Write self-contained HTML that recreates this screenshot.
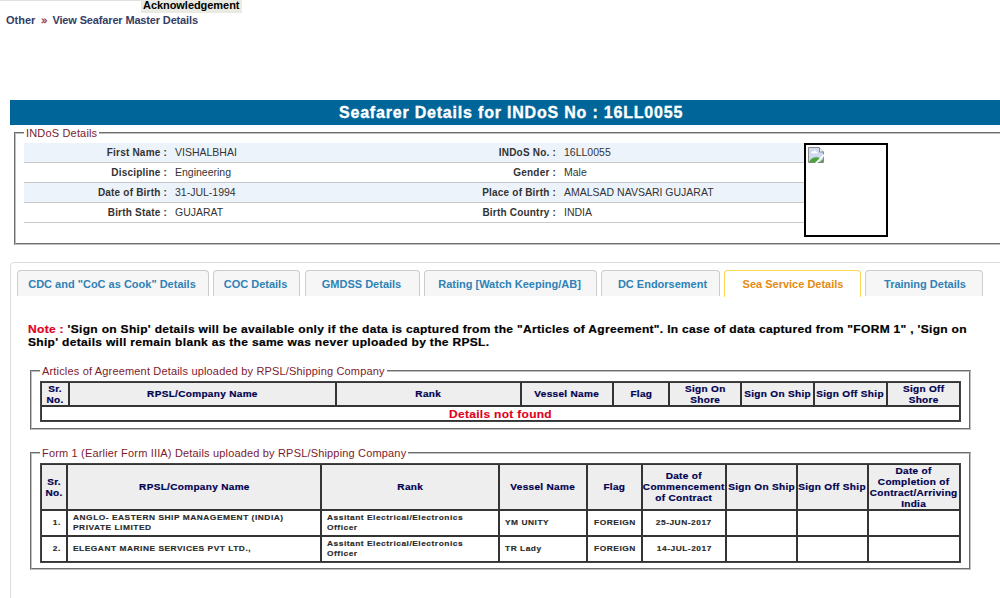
<!DOCTYPE html>
<html><head><meta charset="utf-8">
<style>
*{box-sizing:border-box}
html,body{margin:0;padding:0;background:#fff;width:1000px;height:598px;overflow:hidden;position:relative;font-family:"Liberation Sans",sans-serif}
.abs{position:absolute}
.topline{left:0;top:0;width:141px;height:1px;background:#e2e2dc}
.ack{left:141px;top:0;width:101px;height:13px;background:#eaeae3;font-weight:bold;font-size:11px;color:#000;line-height:11px;padding-left:2px;letter-spacing:-.05px;white-space:nowrap}
.crumb{left:6px;top:14px;font-size:11px;font-weight:bold;color:#353d63;white-space:nowrap;line-height:13px}
.crumb .sep{color:#8e2a3c;margin:0 5px 0 6px;font-weight:normal;-webkit-text-stroke:.3px #8e2a3c}
.crumb .v{letter-spacing:-.15px}
.bar{left:10px;top:100px;width:1010px;height:25px;background:#006699}
.bar .t{position:absolute;left:329px;top:0;line-height:25px;color:#fff;font-weight:bold;font-size:16px;letter-spacing:.8px;white-space:nowrap;-webkit-text-stroke:.35px #fff}
.fs{position:absolute;border:2px groove #c0c0c0}
.lg{position:absolute;background:#fff;color:#7d1a2c;font-size:11px;line-height:13px;padding:0 2px;white-space:nowrap;letter-spacing:.17px}
.row{position:absolute;left:24px;width:780px;height:20px;border-bottom:1px solid #c8c8c8}
.row.alt{background:#edf3fb}
.lbl{position:absolute;font-weight:bold;font-size:10px;letter-spacing:.2px;color:#333;text-align:right;white-space:nowrap;line-height:20px;top:0px}
.val{position:absolute;font-size:10.5px;color:#333;white-space:nowrap;line-height:20px;top:-1px}
.imgbox{left:804px;top:143px;width:84px;height:94px;border:2px solid #000}
.tabs{left:10px;top:262px;width:1010px;height:400px;border:1px solid #dddddd;border-radius:4px}
.tab{position:absolute;top:270px;height:26px;background:#f6f6f6;border:1px solid #cccccc;border-bottom:0;border-radius:4px 4px 0 0;color:#2e82b6;font-weight:bold;font-size:11px;text-align:center;line-height:26px;white-space:nowrap}
.tab.act{background:#fff;border-color:#fbd850;color:#e38b12;height:27px;padding-left:1px}
.note{left:28px;top:323px;font-weight:bold;font-size:11.5px;color:#000;line-height:13px;letter-spacing:.3px;white-space:nowrap;transform:scaleX(1.044);transform-origin:0 0;-webkit-text-stroke:.2px #000}
.note .r{-webkit-text-stroke:.2px #e0001b}
.note .r{color:#e0001b}
table.g{position:absolute;left:40px;border-collapse:separate;border-spacing:0;border:1px solid #444;table-layout:fixed;width:921px}
table.g th,table.g td{border:1px solid #343434;padding:0;text-align:center;overflow:hidden;white-space:nowrap}
table.g th{background:#eeeeee;color:#00004f;font-weight:bold;font-size:9.5px;line-height:0;letter-spacing:.3px;-webkit-text-stroke:.2px #00004f}
table.g th .s{display:inline-block;line-height:11px;vertical-align:top;transform:scaleX(1.055);transform-origin:50% 50%}
table.g td{color:#2a2a2a;font-weight:bold;font-size:8px;line-height:0;letter-spacing:.5px;padding-top:0;-webkit-text-stroke:.15px #2a2a2a}
table.g td .s{display:inline-block;line-height:10px;vertical-align:top;transform:scaleX(1.045);transform-origin:50% 50%}
table.g td.l .s{transform-origin:0 50%}
table.g th .s.o{position:relative;top:-1px}
table.g td.l{text-align:left;padding-left:5px}
table.g td.nf{color:#e0001b;font-size:11.5px;letter-spacing:.3px;padding-top:0;-webkit-text-stroke:.15px #e0001b}
table.g td.nf .s{line-height:12px;transform:scaleX(1.04)}
</style></head><body>
<div class="abs topline"></div>
<div class="abs ack">Acknowledgement</div>
<div class="abs crumb">Other<span class="sep">»</span><span class="v">View Seafarer Master Details</span></div>

<div class="abs bar"><div class="t">Seafarer Details for INDoS No : 16LL0055</div></div>

<div class="fs" style="left:14px;top:132px;width:1010px;height:113px"></div>
<div class="lg" style="left:24px;top:127px">INDoS Details</div>

<div class="row alt" style="top:143px"><div class="lbl" style="right:637px">First Name :</div><div class="val" style="left:151px">VISHALBHAI</div><div class="lbl" style="right:248px">INDoS No. :</div><div class="val" style="left:540px">16LL0055</div></div>
<div class="row" style="top:163px"><div class="lbl" style="right:637px">Discipline :</div><div class="val" style="left:151px">Engineering</div><div class="lbl" style="right:248px">Gender :</div><div class="val" style="left:540px">Male</div></div>
<div class="row alt" style="top:183px"><div class="lbl" style="right:637px">Date of Birth :</div><div class="val" style="left:151px">31-JUL-1994</div><div class="lbl" style="right:248px">Place of Birth :</div><div class="val" style="left:540px">AMALSAD NAVSARI GUJARAT</div></div>
<div class="row" style="top:203px"><div class="lbl" style="right:637px">Birth State :</div><div class="val" style="left:151px">GUJARAT</div><div class="lbl" style="right:248px">Birth Country :</div><div class="val" style="left:540px">INDIA</div></div>

<div class="abs imgbox"></div>
<svg class="abs" style="left:808px;top:147px" width="16" height="16" viewBox="0 0 16 16">
<path d="M0.5 0.5H11L15.5 5V15.5H0.5Z" fill="#cfdaf1" stroke="#8a8a8a" stroke-width="1"/>
<path d="M11.5 1L15 4.5H11.5Z" fill="#fff"/>
<path d="M11.5 0.5V5H15.5" fill="none" stroke="#8a8a8a" stroke-width="1"/>
<path d="M3 6.2C3.2 4.8 4.4 4.3 5.2 4.6C5.8 3 7.6 3.2 8 4.4C9 4.4 9.6 5.3 9.6 6.2Z" fill="#fff"/>
<path d="M1 15.2C2.5 11.5 6 9.6 10.5 10.5L13 12 8 15.2Z" fill="#4aa43a"/>
<path d="M11.5 15.2L15 12V15.2Z" fill="#5a9a4a"/>
<path d="M7.5 16.5L16.5 7.5" stroke="#fff" stroke-width="1.6"/>
</svg>

<div class="abs tabs"></div>
<div class="tab" style="left:17px;width:192px"><span style="position:relative;left:-1px">CDC and "CoC as Cook" Details</span></div>
<div class="tab" style="left:213px;width:87px"><span style="position:relative;left:-1px">COC Details</span></div>
<div class="tab" style="left:305px;width:115px"><span style="position:relative;left:-1px">GMDSS Details</span></div>
<div class="tab" style="left:424px;width:173px"><span style="position:relative;left:-1px">Rating [Watch Keeping/AB]</span></div>
<div class="tab" style="left:601px;width:119px"><span style="position:relative;left:2px">DC Endorsement</span></div>
<div class="tab act" style="left:724px;width:137px">Sea Service Details</div>
<div class="tab" style="left:865px;width:118px"><span style="position:relative;left:1px">Training Details</span></div>

<div class="abs note"><span class="r">Note :</span> 'Sign on Ship' details will be available only if the data is captured from the "Articles of Agreement". In case of data captured from "FORM 1" , 'Sign on<br>Ship' details will remain blank as the same was never uploaded by the RPSL.</div>

<div class="fs" style="left:30px;top:370px;width:941px;height:60px"></div>
<div class="lg" style="left:40px;top:365px">Articles of Agreement Details uploaded by RPSL/Shipping Company</div>
<table class="g t1" style="top:381px">
<colgroup><col style="width:28px"><col style="width:267px"><col style="width:185px"><col style="width:92px"><col style="width:56px"><col style="width:72px"><col style="width:73px"><col style="width:73px"><col style="width:73px"></colgroup>
<tr style="height:24px"><th><span class="s">Sr.<br>No.</span></th><th><span class="s o">RPSL/Company Name</span></th><th><span class="s o">Rank</span></th><th><span class="s o">Vessel Name</span></th><th><span class="s o">Flag</span></th><th><span class="s">Sign On<br>Shore</span></th><th><span class="s o">Sign On Ship</span></th><th><span class="s o">Sign Off Ship</span></th><th><span class="s">Sign Off<br>Shore</span></th></tr>
<tr style="height:15px"><td colspan="9" class="nf"><span class="s">Details not found</span></td></tr>
</table>

<div class="fs" style="left:30px;top:452px;width:941px;height:118px"></div>
<div class="lg" style="left:40px;top:447px">Form 1 (Earlier Form IIIA) Details uploaded by RPSL/Shipping Company</div>
<table class="g" style="top:463px">
<colgroup><col style="width:26px"><col style="width:254px"><col style="width:178px"><col style="width:88px"><col style="width:55px"><col style="width:84px"><col style="width:71px"><col style="width:71px"><col style="width:92px"></colgroup>
<tr style="height:46px"><th><span class="s">Sr.<br>No.</span></th><th><span class="s o">RPSL/Company Name</span></th><th><span class="s o">Rank</span></th><th><span class="s o">Vessel Name</span></th><th><span class="s o">Flag</span></th><th><span class="s o">Date of<br>Commencement<br>of Contract</span></th><th><span class="s o">Sign On Ship</span></th><th><span class="s o">Sign Off Ship</span></th><th><span class="s">Date of<br>Completion of<br>Contract/Arriving<br>India</span></th></tr>
<tr style="height:26px"><td style="padding-left:6px"><span class="s">1.</span></td><td class="l"><span class="s">ANGLO- EASTERN SHIP MANAGEMENT (INDIA)<br>PRIVATE LIMITED</span></td><td class="l"><span class="s">Assitant Electrical/Electronics<br>Officer</span></td><td class="l"><span class="s">YM UNITY</span></td><td><span class="s">FOREIGN</span></td><td><span class="s">25-JUN-2017</span></td><td></td><td></td><td></td></tr>
<tr style="height:26px"><td style="padding-left:6px"><span class="s">2.</span></td><td class="l"><span class="s">ELEGANT MARINE SERVICES PVT LTD.,</span></td><td class="l"><span class="s">Assitant Electrical/Electronics<br>Officer</span></td><td class="l"><span class="s">TR Lady</span></td><td><span class="s">FOREIGN</span></td><td><span class="s">14-JUL-2017</span></td><td></td><td></td><td></td></tr>
</table>
</body></html>
